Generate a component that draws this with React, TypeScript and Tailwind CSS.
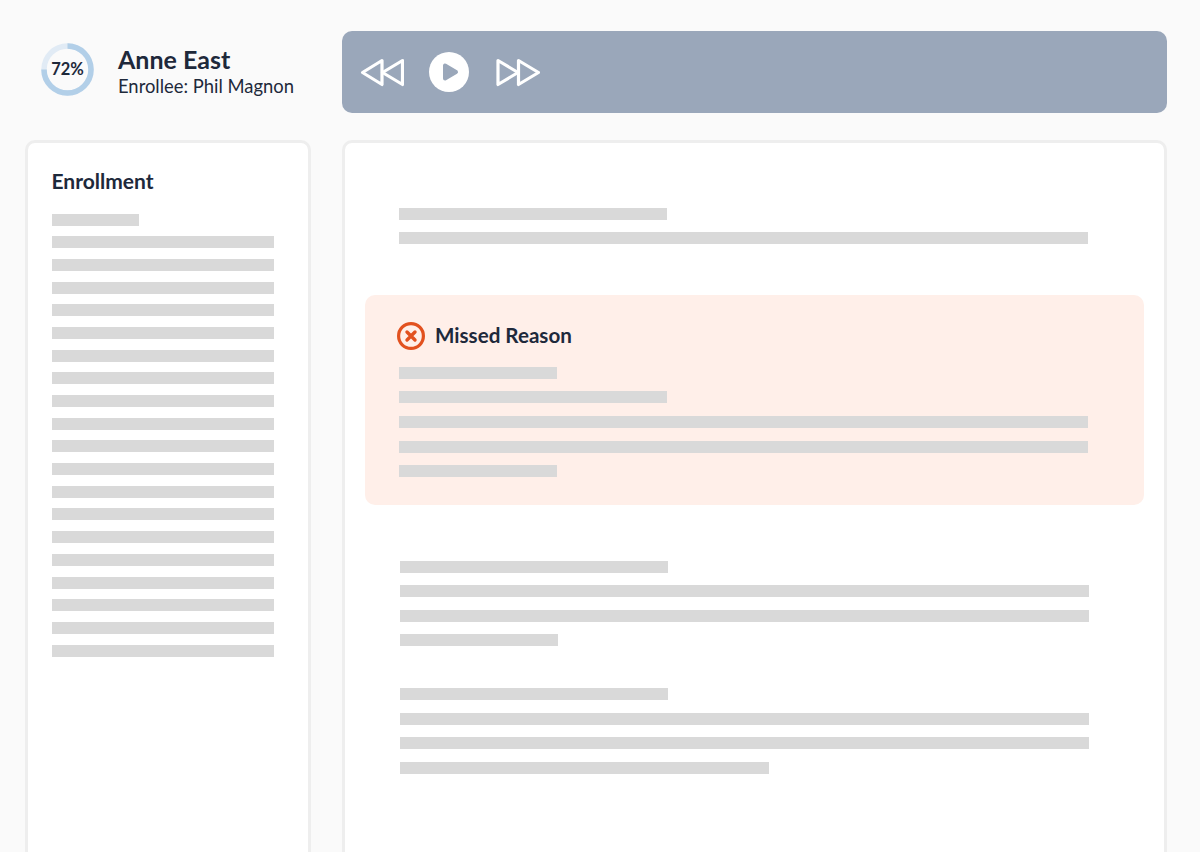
import React from 'react';

const FONT = { fontFamily: '"Lato", "Noto Sans", sans-serif' };

// placeholder text line
const Bar = ({ className }: { className: string }) => <div className={`h-[12px] bg-[#d9d9d9] ${className}`} />;

const ProgressRing = () => (
  <div className="relative w-[53px] h-[53px] shrink-0 ml-[1px] -mt-[6px]">
    <svg width="53" height="53" viewBox="0 0 53 53" fill="none">
      <circle cx="26.5" cy="26.5" r="23.5" stroke="#e1ebf5" strokeWidth="5.5" />
      <circle
        cx="26.5"
        cy="26.5"
        r="23.5"
        stroke="#b2cfe8"
        strokeWidth="5.5"
        strokeDasharray="110 147.7"
        transform="rotate(-90 26.5 26.5)"
      />
    </svg>
    <span className="absolute inset-0 flex items-center justify-center text-[16.5px] font-bold text-[#1e293b]">72%</span>
  </div>
);

const Transport = () => (
  <div className="flex items-center">
    <svg width="44" height="30" viewBox="0 0 44 30" fill="none" stroke="#fff" strokeWidth="3.2" strokeLinejoin="round" className="mt-[1px]">
      <path d="M22 2.500 2.500 14.500 22 26.500z" />
      <path d="M42.500 2.500 22.500 14.500l20 12z" />
    </svg>
    <svg width="40" height="40" viewBox="0 0 40 40" className="ml-[25px]">
      <circle cx="20" cy="20" r="20" fill="#fff" />
      <path d="M16 13.500v13l11-6.500z" fill="#9aa7ba" stroke="#9aa7ba" strokeWidth="4" strokeLinejoin="round" />
    </svg>
    <svg width="44" height="30" viewBox="0 0 44 30" fill="none" stroke="#fff" strokeWidth="3.2" strokeLinejoin="round" className="ml-[27px] mt-[1px]">
      <path d="M2 2.500 22 14.500l-20 12z" />
      <path d="M22.500 2.500 42.500 14.500l-20 12z" />
    </svg>
  </div>
);

const MissedIcon = () => (
  <svg width="28" height="28" viewBox="0 0 28 28" fill="none" stroke="#e2511f" strokeWidth="3.200" strokeLinecap="round">
    <circle cx="14" cy="14" r="12.400" />
    <path d="M10 10l8 8M18 10l-8 8" strokeWidth="3.400" />
  </svg>
);

export default function App() {
  return (
    <div className="h-[852px] w-[1200px] overflow-hidden bg-[#fafafa] pt-[31px] pl-[25px] pr-[33px] flex flex-col gap-[27px]" style={FONT}>
      {/* Top row */}
      <div className="flex h-[82px] gap-[31px]">
        <div className="w-[286px] flex items-center gap-[24px] pl-[15px]">
          <ProgressRing />
          <div className="flex flex-col text-[#1e293b] -mt-[3px]">
            <span className="text-[25px] leading-[30px] font-bold">Anne East</span>
            <span className="text-[18.400px] leading-[22px] mt-[1px]">Enrollee: Phil Magnon</span>
          </div>
        </div>
        <div className="flex-1 bg-[#9aa7ba] rounded-[10px] flex items-center pl-[18px]">
          <Transport />
        </div>
      </div>

      {/* Content */}
      <div className="flex flex-1 gap-[31px] min-h-0">
        {/* Enrollment column */}
        <div className="w-[286px] h-[760px] bg-white border-[3px] border-[#eeeeee] rounded-[10px] pt-[25px] pl-[23.500px] pr-[34px]">
          <h2 className="text-[21px] leading-[26px] font-bold text-[#1e293b] mb-[20px] -mt-[0.500px]">Enrollment</h2>
          <div className="flex flex-col gap-[10.700px]">
            <Bar className="w-[87px]" />
            {Array.from({ length: 19 }).map((_, i) => (
              <Bar key={i} className="w-full" />
            ))}
          </div>
        </div>

        {/* Main panel */}
        <div className="flex-1 h-[760px] bg-white border-[3px] border-[#eeeeee] rounded-[10px] pt-[65px] px-[20px]">
          <div className="flex flex-col gap-[12px] pl-[34px]">
            <Bar className="w-[268px]" />
            <Bar className="w-[689px]" />
          </div>

          <div className="mt-[51px] h-[210px] bg-[#ffefe9] rounded-[10px] pl-[34px] pt-[27px]">
            <div className="flex items-center gap-[10px] -ml-[2px] h-[28px]">
              <MissedIcon />
              <span className="text-[20.600px] font-bold text-[#1e293b] -mt-[1px]">Missed Reason</span>
            </div>
            <div className="flex flex-col gap-[12.400px] mt-[17px]">
              <Bar className="w-[158px]" />
              <Bar className="w-[268px]" />
              <Bar className="w-[689px]" />
              <Bar className="w-[689px] mt-[0.500px]" />
              <Bar className="w-[158px]" />
            </div>
          </div>

          <div className="flex flex-col gap-[12.400px] mt-[56px] pl-[35px]">
            <Bar className="w-[268px]" />
            <Bar className="w-[689px]" />
            <Bar className="w-[689px]" />
            <Bar className="w-[158px]" />
          </div>

          <div className="flex flex-col gap-[12.400px] mt-[42px] pl-[35px]">
            <Bar className="w-[268px]" />
            <Bar className="w-[689px]" />
            <Bar className="w-[689px]" />
            <Bar className="w-[369px] mt-[1px]" />
          </div>
        </div>
      </div>
    </div>
  );
}
